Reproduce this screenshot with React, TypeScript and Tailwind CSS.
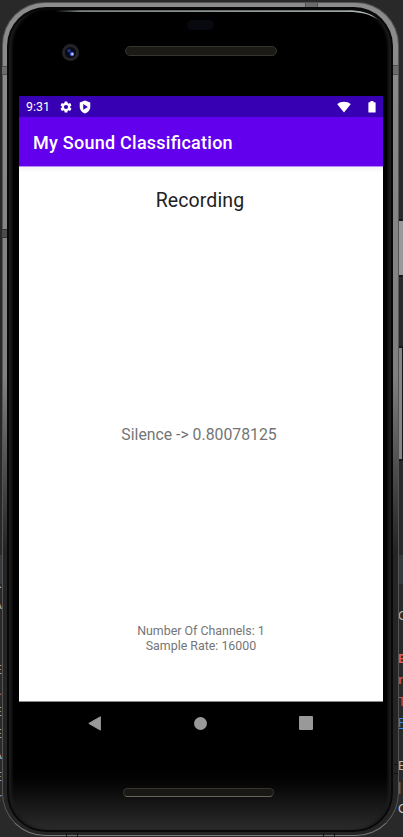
import React from "react";

const leftCode = [
  { text: ".", color: "text-[#b5bac0]" },
  { text: "A", color: "text-[#c0b5a5]" },
  { text: "", color: "" },
  { text: "", color: "" },
  { text: "E", color: "text-[#b0a08e]" },
  { text: ".", color: "text-[#b86a6a]" },
  { text: "E", color: "text-[#a0a6ad]" },
  { text: "E", color: "text-[#a0a6ad]" },
  { text: "A", color: "text-[#b5bac0]" },
  { text: "E", color: "text-[#a0a6ad]" },
  { text: "r", color: "text-[#6f97c0]" },
];

const rightCode = [
  { text: "G", color: "text-[#b5b5b5]" },
  { text: "", color: "" },
  { text: "E", color: "text-[#e05a60] font-bold" },
  { text: "r", color: "text-[#c5525a] font-bold" },
  { text: "T", color: "text-[#c5525a]" },
  { text: "R", color: "text-[#3a82ee] underline" },
  { text: "", color: "" },
  { text: "E", color: "text-[#b5b5b5]" },
  { text: "|", color: "text-[#777777]" },
  { text: "G", color: "text-[#c5c5c5]" },
];

function Backdrop() {
  return (
    <div className="absolute inset-0 flex flex-col font-['Liberation_Sans',sans-serif] text-[13px] leading-[21.4px]">
      <div className="flex h-[555px] flex-col items-end pt-[219px]">
        <div className="h-[58px] w-[5px] border-y-2 border-[#161616] bg-[#999]" />
        <div className="mt-[69px] h-[115px] w-[5px] border-y-2 border-r border-[#161616] bg-[#858585]" />
      </div>
      <div className="flex flex-1 justify-between bg-[linear-gradient(#343a3e_29px,#292929_29px)] pt-[18px]">
        <div className="flex w-[2px] flex-col items-end">
          {leftCode.map((c, i) => (
            <span key={i} className={`h-[21.4px] ${c.color}`}>
              {c.text}
            </span>
          ))}
        </div>
        <div className="flex w-[5px] flex-col items-start pt-[32px]">
          {rightCode.map((c, i) => (
            <span key={i} className={`h-[21.4px] ${c.color}`}>
              {c.text}
            </span>
          ))}
        </div>
      </div>
    </div>
  );
}

function FrameDetails() {
  return (
    <svg className="absolute inset-0" width="403" height="837" viewBox="0 0 403 837" fill="none">
      <defs>
        <linearGradient id="glassEdge" x1="55" y1="0" x2="378" y2="0" gradientUnits="userSpaceOnUse">
          <stop offset="0" stopColor="#778080" stopOpacity="0" />
          <stop offset=".08" stopColor="#7d8585" />
          <stop offset=".9" stopColor="#9aa3a3" />
          <stop offset="1" stopColor="#c8cece" />
        </linearGradient>
      </defs>
      <path d="M55 10.300H348c11 0 22 2 30 9.500-8-5.500-17-7.700-30-7.700H55z" fill="url(#glassEdge)" />
      <path d="M2 66h5v9H2zM393 65h5v10h-5zM305 3h12v4h-12z" fill="#6c6c6c" />
      <path d="M2 66.500h5M2 74.500h5M393 65.500h5M393 74.500h5M305.500 3v4M317.500 3v4" stroke="#505050" />
      <path d="M2 229h5v9H2z" fill="#4c4c4c" />
      <path d="M2 229.500h5M2 237.500h5" stroke="#333" />
      <path d="M394 764.500h4M394 773.500h4M66.500 833v4M77.500 833v4M323.500 833v4M334.500 833v4" stroke="#111" />
    </svg>
  );
}

function StatusBar() {
  return (
    <div className="flex h-[21px] items-center bg-[#3700b3] pl-[7px] pr-[6px] text-white">
      <span className="w-[25px] whitespace-nowrap text-[12.4px] leading-[21px]">9:31</span>
      <svg className="ml-[8px]" width="14" height="14" viewBox="0 0 24 24" fill="currentColor">
        <path d="M19.14 12.94c.04-.3.06-.61.06-.94s-.02-.64-.07-.94l2.03-1.58a.5.5 0 0 0 .12-.61l-1.92-3.32a.5.5 0 0 0-.59-.22l-2.39.96a7 7 0 0 0-1.62-.94l-.36-2.54a.5.5 0 0 0-.48-.41h-3.84a.5.5 0 0 0-.47.41l-.36 2.54a7.3 7.3 0 0 0-1.62.94l-2.39-.96a.5.5 0 0 0-.59.22L2.74 8.87a.5.5 0 0 0 .12.61l2.03 1.58a6 6 0 0 0-.02 1.88l-2.03 1.58a.5.5 0 0 0-.12.61l1.92 3.32c.12.22.37.29.59.22l2.39-.96c.5.38 1.03.7 1.62.94l.36 2.54c.05.24.24.41.48.41h3.84c.24 0 .44-.17.47-.41l.36-2.54a7 7 0 0 0 1.62-.94l2.39.96c.22.08.47 0 .59-.22l1.92-3.32a.5.5 0 0 0-.12-.61zM12 15.6a3.6 3.6 0 1 1 0-7.2 3.6 3.6 0 0 1 0 7.2z" />
      </svg>
      <svg className="ml-[6px]" width="12" height="14" viewBox="1 0 20 24" fill="currentColor" fillRule="evenodd">
        <path d="M11 1 2 4.3V12c0 5 3.800 9.400 9 11 5.200-1.600 9-6 9-11V4.300zM8 7l8 4.800L8 16.500z" />
      </svg>
      <svg className="ml-auto" width="14" height="12" viewBox="0 0 14 12" fill="currentColor">
        <path d="M.3 3.200C4 0 10 0 13.700 3.200L7 11.500z" />
      </svg>
      <svg className="ml-[17px] mr-[1px]" width="8" height="12" viewBox="0 0 8 12" fill="currentColor">
        <path d="M2.400 0h3v1.300H7a.6.6 0 0 1 .6.600v9.100a.6.6 0 0 1-.6.600H1a.6.6 0 0 1-.6-.600V1.900a.6.6 0 0 1 .6-.600h1.400z" />
      </svg>
    </div>
  );
}

function Screen() {
  return (
    <div className="mx-[10px] flex h-[606px] w-[364px] flex-col bg-white">
      <StatusBar />
      <div className="flex h-[49px] items-center bg-[#6200ee] pl-[14px] pt-[2px] text-[18px] font-medium tracking-[0.25px] text-white [font-feature-settings:'liga'_1]">
        My Sound Classification
      </div>
      <div className="flex flex-1 flex-col items-center border-b border-t border-b-[#888] border-t-[#b98cf5] bg-gradient-to-b from-[#f3f3f3] via-white via-[1%] to-white text-[#757575]">
        <h1 className="mt-[22px] pr-[2px] text-[19.500px] leading-[24px] tracking-[0.1px] text-[#212121]">Recording</h1>
        <p className="mt-[212px] pr-[4px] text-[15.800px] leading-[20px]">Silence -&gt; 0.80078125</p>
        <div className="mt-[179px] text-center text-[12.400px] leading-[14.500px]">
          <p>Number Of Channels: 1</p>
          <p>Sample Rate: 16000</p>
        </div>
      </div>
    </div>
  );
}

function Navigation() {
  return (
    <div className="flex h-[42px] items-center justify-between pl-[79px] pr-[78px]">
      <svg width="14" height="15" viewBox="0 0 14 15">
        <path d="M.8 7.400 12.400.8v13.300z" fill="#999" stroke="#999" strokeWidth="1" strokeLinejoin="round" />
      </svg>
      <div className="h-[13px] w-[13px] rounded-full bg-[#999]" />
      <div className="h-[14px] w-[14px] rounded-[1px] bg-[#999]" />
    </div>
  );
}

function TopBezel() {
  return (
    <div className="flex h-[87px] flex-col pt-[11px]">
      <div className="ml-[178px] h-[10px] w-[27px] rounded-full bg-[#08090e]" />
      <div className="mt-[14px] flex items-center gap-[46px] pl-[53px]">
        <svg width="17" height="17" viewBox="0 0 17 17">
          <circle cx="8.500" cy="8.500" r="8.500" fill="#242326" />
          <circle cx="8.500" cy="8.500" r="5.500" fill="#08091a" />
          <circle cx="7" cy="6.800" r="1.800" fill="#25368e" />
          <circle cx="10" cy="10" r="2.200" fill="#4259d0" />
          <circle cx="10.300" cy="10.200" r="1.100" fill="#cad5ff" />
        </svg>
        <div className="mb-[3px] h-[10px] w-[152px] rounded-full border border-[#35342f] bg-[#1c1a14]" />
      </div>
    </div>
  );
}

export default function App() {
  return (
    <div className="relative h-[837px] w-[403px] overflow-hidden bg-[#292929] pl-[2px] pt-[2px] font-[Roboto,sans-serif]">
      <Backdrop />
      <div className="relative h-[834px] w-[397px] rounded-[43px] border border-[#555] border-b-[#777] bg-gradient-to-b from-[#8c8c8c] via-[#808080] via-[45%] to-[#242424] to-[66%] pb-[3px] pl-[4px] pr-[5px] pt-[4px]">
        <div className="h-full w-full rounded-[39px] bg-[#080808] p-[2px]">
          <div className="flex h-full w-full flex-col rounded-[37px] bg-gradient-to-b from-black from-[91%] via-[#111] via-[96%] to-[#2b2b2b] shadow-[inset_4px_0_3px_-1px_#1b1b1b,inset_-4px_0_3px_-1px_#1b1b1b]">
            <TopBezel />
            <Screen />
            <Navigation />
            <div className="ml-[114px] mt-[44px] h-[9px] w-[151px] rounded-full border border-[#35342f] border-b-[#68645c] bg-[#191813]" />
          </div>
        </div>
      </div>
      <FrameDetails />
    </div>
  );
}
